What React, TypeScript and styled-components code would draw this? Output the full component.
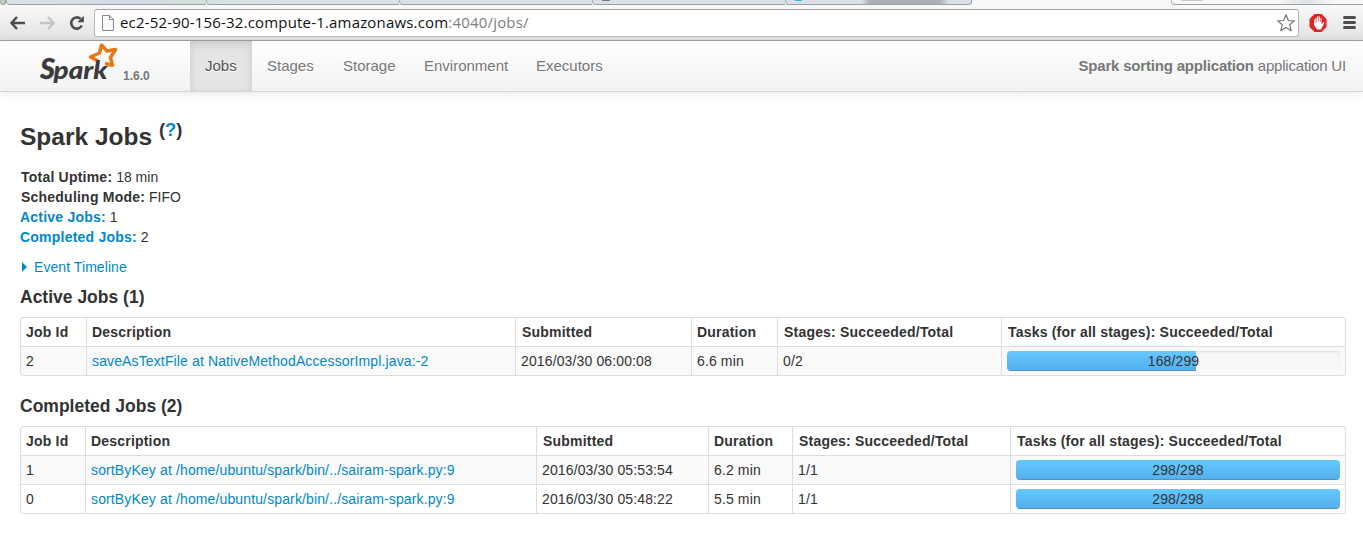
import React from "react";
import styled, { createGlobalStyle } from "styled-components";

const Global = createGlobalStyle`
  * { box-sizing: border-box; }
  body { margin: 0; background: #fff; color: #333; font: 14px/20px "Liberation Sans", Arial, sans-serif; overflow: hidden; }
`;

const Page = styled.div`width: 1363px; height: 543px; overflow: hidden;`;

const TabStrip = styled.div`height: 5px; display: flex; background: #f8f8f8;`;
const StripTab = styled.div<{ $w: number; $bg?: string; $last?: boolean }>`
  width: ${(p) => p.$w}px;
  height: 5px;
  flex: none;
  background: ${(p) => p.$bg || "#dbe0e6"};
  border-bottom: 1px solid #9a9fa6;
  border-left: 1px solid #a9aeb5;
  border-bottom-left-radius: 4px;
  border-bottom-right-radius: ${(p) => (p.$last ? 4 : 0)}px;
  border-right: ${(p) => (p.$last ? "1px solid #8f949b" : "0")};
`;
const OpenTab = styled.div`width: 199px; flex: none;`;
const Favicon = styled.div<{ $w: number; $color: string }>`
  width: ${(p) => p.$w}px;
  height: 1px;
  margin-left: 9px;
  background: ${(p) => p.$color};
`;

const Toolbar = styled.div`
  height: 36px;
  display: flex;
  align-items: center;
  padding: 0 6px 0 9px;
  background: linear-gradient(#f9f9f9, #e2e2e2);
  border-bottom: 1px solid #a3a3a3;
`;
const NavIcons = styled.div`display: flex; gap: 13px; width: 85px; svg { display: block; flex: none; }`;
const Omnibox = styled.div`
  width: 1205px;
  height: 28px;
  flex: none;
  display: flex;
  align-items: center;
  padding: 0 3px 0 7px;
  background: #fff;
  border: 1px solid #b8b8b8;
  border-top-color: #a0a0a0;
  border-radius: 3px;
  svg { flex: none; }
`;
const Url = styled.div`
  flex: 1;
  margin-left: 6px;
  padding-bottom: 1px;
  color: #111;
  font: 15px/24px "Open Sans", "Noto Sans", sans-serif;
  letter-spacing: 0.18px;
  white-space: nowrap;
  span { color: #808080; }
`;
const Extensions = styled.div`display: flex; align-items: center; gap: 16px; margin-left: 10px; svg { flex: none; }`;

const Navbar = styled.div`
  height: 51px;
  display: flex;
  padding: 0 17px 0 40px;
  background: linear-gradient(#fff, #f2f2f2);
  border-bottom: 1px solid #d4d4d4;
  box-shadow: 0 1px 10px rgba(0, 0, 0, 0.1);
`;
const Brand = styled.div`width: 150px; display: flex;`;
const Version = styled.span`
  margin: 25px 0 0 5px;
  color: #777;
  font-size: 12px;
  font-weight: bold;
`;
const NavItem = styled.a<{ $active?: boolean; $w: number }>`
  width: ${(p) => p.$w}px;
  padding-left: 15px;
  font-size: 15px;
  line-height: 50px;
  color: ${(p) => (p.$active ? "#555" : "#777")};
  background: ${(p) => (p.$active ? "#e5e5e5" : "none")};
  box-shadow: ${(p) => (p.$active ? "inset 0 3px 8px rgba(0,0,0,.125)" : "none")};
  text-shadow: 0 1px 0 #fff;
`;
const AppName = styled.div`
  margin-left: auto;
  font-size: 15px;
  line-height: 50px;
  letter-spacing: -0.19px;
  color: #777;
  text-shadow: 0 1px 0 #fff;
`;

const Content = styled.div`padding: 20px 17px 0 20px;`;
const Title = styled.h3`
  margin: 0;
  height: 55px;
  font-size: 24.5px;
  line-height: 50px;
  sup { position: relative; top: -0.5em; font-size: 75%; line-height: 0; vertical-align: baseline; }
`;
const Blue = styled.a`color: #0088cc;`;
const Summary = styled.ul`margin: 0 0 10px; padding: 0; list-style: none;`;
const Fact = styled.li<{ $inset?: boolean }>`
  height: 20px;
  padding-left: ${(p) => (p.$inset ? 1 : 0)}px;
  b { letter-spacing: 0.22px; }
`;
const Timeline = styled.div`
  height: 20px;
  display: flex;
  align-items: center;
  color: #0088cc;
  letter-spacing: 0.07px;
  &::before {
    content: "";
    margin: 0 7px 0 2px;
    border: 5px solid transparent;
    border-left-color: #0088cc;
    border-right: 0;
  }
`;
const Section = styled.h4`margin: 10px 0; font-size: 17.5px; line-height: 20px;`;

const Table = styled.table`
  width: 1326px;
  table-layout: fixed;
  margin-bottom: 20px;
  border: 1px solid #ddd;
  border-left: 0;
  border-radius: 4px;
  border-collapse: separate;
  border-spacing: 0;
  th, td { padding: 4px 5px; border-left: 1px solid #ddd; text-align: left; line-height: 20px; white-space: nowrap; }
  td { border-top: 1px solid #ddd; letter-spacing: 0.13px; }
  th { letter-spacing: 0.2px; }
  th:nth-child(n + 3) { padding-left: 6px; letter-spacing: 0.2px; }
  th:nth-child(4) { padding-left: 5px; }
  tbody tr:nth-child(odd) td { background: #f9f9f9; }
  tr:first-child th:first-child { border-top-left-radius: 4px; }
  tr:last-child td:first-child { border-bottom-left-radius: 4px; }
  tr:last-child td:last-child { border-bottom-right-radius: 4px; }
`;
const Progress = styled.div`
  position: relative;
  height: 20px;
  overflow: hidden;
  border-radius: 4px;
  background: linear-gradient(#f5f5f5, #f9f9f9);
  box-shadow: inset 0 1px 2px rgba(0, 0, 0, 0.1);
`;
const Fill = styled.div`
  height: 20px;
  background: linear-gradient(#64c9ff, #54aeec);
  box-shadow: inset 0 -1px 0 rgba(0, 0, 0, 0.15);
`;
const ProgressLabel = styled.span`position: absolute; inset: 0; text-align: center;`;

type Job = { id: number; desc: string; submitted: string; duration: string; stages: string; done: number; total: number };

const active: Job[] = [
  { id: 2, desc: "saveAsTextFile at NativeMethodAccessorImpl.java:-2", submitted: "2016/03/30 06:00:08", duration: "6.6 min", stages: "0/2", done: 168, total: 299 },
];
const completed: Job[] = [
  { id: 1, desc: "sortByKey at /home/ubuntu/spark/bin/../sairam-spark.py:9", submitted: "2016/03/30 05:53:54", duration: "6.2 min", stages: "1/1", done: 298, total: 298 },
  { id: 0, desc: "sortByKey at /home/ubuntu/spark/bin/../sairam-spark.py:9", submitted: "2016/03/30 05:48:22", duration: "5.5 min", stages: "1/1", done: 298, total: 298 },
];
const headings = ["Job Id", "Description", "Submitted", "Duration", "Stages: Succeeded/Total", "Tasks (for all stages): Succeeded/Total"];

function JobTable({ jobs, widths }: { jobs: Job[]; widths: number[] }) {
  return (
    <Table>
      <colgroup>{widths.map((w, i) => <col key={i} width={w} />)}</colgroup>
      <thead><tr>{headings.map((h) => <th key={h}>{h}</th>)}</tr></thead>
      <tbody>
        {jobs.map((j) => (
          <tr key={j.id}>
            <td>{j.id}</td>
            <td><Blue>{j.desc}</Blue></td>
            <td>{j.submitted}</td>
            <td>{j.duration}</td>
            <td>{j.stages}</td>
            <td>
              <Progress>
                <Fill style={{ width: `calc(${(j.done / j.total) * 100}% + 1.5px)` }} />
                <ProgressLabel>{j.done}/{j.total}</ProgressLabel>
              </Progress>
            </td>
          </tr>
        ))}
      </tbody>
    </Table>
  );
}

const SparkLogo = () => (
  <svg width="78" height="50" viewBox="0 0 78 50">
    <path d="M65 22.500L72.500 24.200L70.500 16.500L75.500 8.500L67 10L61.500 4L59.500 12L50.500 16L58 20" fill="none" stroke="#e87817" strokeWidth="3.500" strokeLinejoin="round" />
    <g fontFamily="Lato" fontWeight="900" fontStyle="italic" fill="#3c3a3e">
      <text x="0" y="38" fontSize="28" textLength="15" lengthAdjust="spacingAndGlyphs" stroke="#3c3a3e" strokeWidth=".3">S</text>
      <text x="13.500" y="38" fontSize="25" textLength="54" lengthAdjust="spacingAndGlyphs">park</text>
    </g>
  </svg>
);

export default function App() {
  return (
    <Page>
      <Global />
      <TabStrip>
        <StripTab $w={6} $bg="#c9ccbc" $last />
        <StripTab $w={200} $bg="linear-gradient(90deg,#d9e3e4,#d5dbe6 60%,#d3e2d8)" />
        <StripTab $w={193} $bg="linear-gradient(90deg,#d6e3e1,#dbe0e6 50%)" />
        <StripTab $w={193} />
        <StripTab $w={193}><Favicon $w={8} $color="#777" /></StripTab>
        <StripTab $w={187} $last $bg="linear-gradient(90deg,#dbe0e6 41%,#adb0b5 45%,#adb0b5 83%,#dbe0e6 88%)"><Favicon $w={7} $color="#2bb5e8" /></StripTab>
        <OpenTab />
        <StripTab $w={192} $bg="linear-gradient(90deg,#f7f7f7 55%,#dfe2e6 70%,#f7f7f7 85%)"><Favicon $w={22} $color="#c4c4c4" /></StripTab>
      </TabStrip>
      <Toolbar>
        <NavIcons>
          <svg width="17" height="16" viewBox="0 0 17 16" fill="none" stroke="#4d4d4d" strokeWidth="2.500"><path d="M16 8H3M8 2L2.500 8L8 14" /></svg>
          <svg width="17" height="16" viewBox="0 0 17 16" fill="none" stroke="#c6c6c6" strokeWidth="2.500"><path d="M1 8H14M9 2L14.500 8L9 14" /></svg>
          <svg width="17" height="16" viewBox="0 0 17 16"><path d="M12.800 10.500A5.600 5.600 0 1 1 11.500 3.800" fill="none" stroke="#4d4d4d" strokeWidth="2.600" /><path d="M14.800 .8V7.300H8.300Z" fill="#4d4d4d" /></svg>
        </NavIcons>
        <Omnibox>
          <svg width="12" height="16" viewBox="0 0 12 16" fill="#fafafa" stroke="#8a8a8a"><path d="M.5.5H7.500L11.500 4.500V15.500H.5ZM7.500.5V4.500H11.500" /></svg>
          <Url>ec2-52-90-156-32.compute-1.amazonaws.com<span>:4040/jobs/</span></Url>
          <svg width="18" height="18" viewBox="0 0 18 18" fill="#fff" stroke="#777" strokeWidth="1.200" strokeLinejoin="round"><path d="M9 .8L11.300 6.500L17.300 6.900L12.700 10.800L14.200 16.700L9 13.500L3.800 16.700L5.300 10.800L.7 6.900L6.700 6.500Z" /></svg>
        </Omnibox>
        <Extensions>
          <svg width="18" height="18" viewBox="0 0 18 18"><path d="M5.500 0H12.500L17.500 5V13L12.500 18H5.500L.5 13V5Z" fill="#e02220" /><path d="M5 5.500V11L8 15.500H12L15.500 8.500L14.300 8L12.500 10.500V4H11.500V8H11V2.500H9.800V8H9.300V2.500H8V8H7.500V4H6.300V9H5.800V5.500Z" fill="#fff" /></svg>
          <svg width="13" height="13" viewBox="0 0 13 13" stroke="#4d4d4d" strokeWidth="3" strokeLinecap="round"><path d="M1.500 1.500H11.500M1.500 6.500H11.500M1.500 11.500H11.500" /></svg>
        </Extensions>
      </Toolbar>
      <Navbar>
        <Brand><SparkLogo /><Version>1.6.0</Version></Brand>
        <NavItem $w={62} $active>Jobs</NavItem>
        <NavItem $w={76}>Stages</NavItem>
        <NavItem $w={81}>Storage</NavItem>
        <NavItem $w={112}>Environment</NavItem>
        <NavItem $w={97}>Executors</NavItem>
        <AppName><b>Spark sorting application</b> application UI</AppName>
      </Navbar>
      <Content>
        <Title>Spark Jobs <sup>(<Blue>?</Blue>)</sup></Title>
        <Summary>
          <Fact $inset><b>Total Uptime:</b> 18 min</Fact>
          <Fact $inset><b>Scheduling Mode:</b> FIFO</Fact>
          <Fact><Blue><b>Active Jobs:</b></Blue> 1</Fact>
          <Fact><Blue><b>Completed Jobs:</b></Blue> 2</Fact>
        </Summary>
        <Timeline>Event Timeline</Timeline>
        <Section>Active Jobs (1)</Section>
        <JobTable jobs={active} widths={[66, 429, 176, 86, 224, 344]} />
        <Section>Completed Jobs (2)</Section>
        <JobTable jobs={completed} widths={[65, 451, 172, 84, 218, 335]} />
      </Content>
    </Page>
  );
}
